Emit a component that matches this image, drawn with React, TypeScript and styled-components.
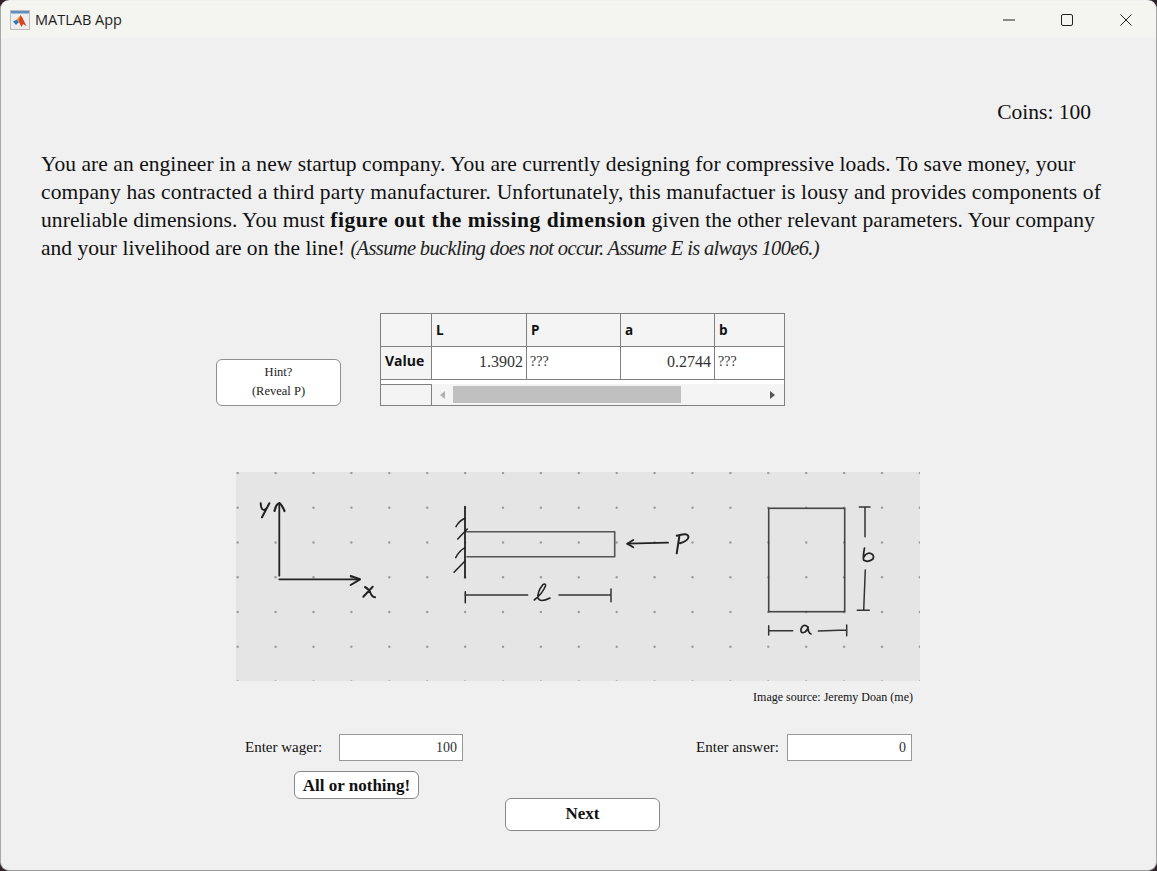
import React from "react";
import styled, { createGlobalStyle } from "styled-components";

const Global = createGlobalStyle`
  html, body { margin: 0; padding: 0; background: #2e2329; }
  body { width: 1157px; height: 871px; overflow: hidden; }
  * { box-sizing: border-box; }
`;

const serif = `"Liberation Serif", "Times New Roman", serif`;
const sans = `"Open Sans", "Noto Sans", sans-serif`;

const Window = styled.div`
  width: 1157px;
  height: 871px;
  padding-top: 1px;
  display: flex;
  flex-direction: column;
  background: #f0f0f0;
  border-radius: 9px;
  border-bottom: 1px solid #9a9a9a;
  border-right: 1px solid #a8a8a8;
  border-left: 1px solid #a8a8a8;
  overflow: hidden;
  font-family: ${serif};
  color: #111;
`;
const TitleBar = styled.header`
  height: 37px;
  flex: none;
  display: flex;
  align-items: center;
  background: #f4f4f0;
  padding: 0 1px 0 9px;
`;
const AppIcon = styled.svg`
  width: 20px;
  height: 20px;
  flex: none;
`;
const TitleText = styled.span`
  margin-left: 5px;
  font: 14.5px ${sans};
  color: #1c1c1c;
  flex: 1;
`;
const WinButton = styled.button`
  width: 58.5px;
  height: 37px;
  padding: 0;
  border: 0;
  background: none;
  display: flex;
  align-items: center;
  justify-content: center;
`;
const Main = styled.main`
  flex: 1;
  display: flex;
  flex-direction: column;
`;
const Coins = styled.div`
  margin-top: 62px;
  padding-right: 65px;
  text-align: right;
  font-size: 21.5px;
  line-height: 24px;
`;
const Prose = styled.div`
  margin: 26px 0 0 40px;
  font-size: 21.5px;
  line-height: 28px;
  white-space: nowrap;
`;
const Line = styled.p<{ $track: number }>`
  margin: 0;
  letter-spacing: ${(p) => p.$track}px;
`;
const Strong = styled.b`
  letter-spacing: 0.55px;
`;
const Aside = styled.em`
  color: #222;
  font-size: 20.5px;
  letter-spacing: -0.65px;
`;
const DataRow = styled.section`
  margin: 51px 0 0 215px;
  display: flex;
  align-items: flex-end;
  gap: 39px;
`;
const HintButton = styled.button`
  width: 125px;
  height: 47px;
  padding: 0 0 1px;
  background: #fff;
  border: 1px solid #8f8f8f;
  border-radius: 6px;
  font: 12.5px/19px ${serif};
  color: #222;
`;
const TableBox = styled.div`
  width: 405px;
  height: 93px;
  border: 1px solid #808080;
  background: #fff;
  display: flex;
  flex-direction: column;
`;
const Grid = styled.div`
  display: grid;
  grid-template-columns: 51px 95px 94px 94px 69px;
  grid-template-rows: 33px 32px;
  border-bottom: 1px solid #808080;
  height: 66px;
  flex: none;
`;
const HeadCell = styled.div`
  background: #f4f4f4;
  border-right: 1px solid #808080;
  border-bottom: 1px solid #808080;
  padding-left: 4px;
  display: flex;
  align-items: center;
  font: 700 13.5px ${sans};
  color: #111;
  &:nth-child(5) { border-right: 0; }
`;
const RowHead = styled(HeadCell)`
  border-bottom: 0;
  padding-bottom: 5px;
  font-size: 14px;
`;
const Cell = styled.div<{ $num?: boolean }>`
  background: #fff;
  border-right: 1px solid #808080;
  padding: 0 3px 3px;
  display: flex;
  align-items: center;
  justify-content: ${(p) => (p.$num ? "flex-end" : "flex-start")};
  font-size: ${(p) => (p.$num ? "16px" : "14px")};
  color: #333;
  &:last-child { border-right: 0; }
`;
const ScrollRow = styled.div`
  flex: 1;
  display: flex;
  align-items: flex-end;
`;
const ScrollCorner = styled.div`
  width: 51px;
  height: 21px;
  background: #f4f4f4;
  border-top: 1px solid #808080;
  border-right: 1px solid #808080;
  flex: none;
`;
const ScrollTrack = styled.div`
  flex: 1;
  height: 21px;
  padding: 0 9px 0 8px;
  display: flex;
  align-items: center;
  background: #f4f4f4;
`;
const ScrollThumb = styled.div`
  width: 228px;
  height: 17px;
  margin-left: 8px;
  background: #c0c0c0;
`;
const Arrow = styled.span<{ $right?: boolean; $c: string }>`
  width: 0;
  height: 0;
  margin-left: ${(p) => (p.$right ? "auto" : "0")};
  border-top: 4px solid transparent;
  border-bottom: 4px solid transparent;
  ${(p) => (p.$right ? `border-left: 5px solid ${p.$c};` : `border-right: 5px solid ${p.$c};`)}
`;
const Figure = styled.figure`
  margin: 66px 0 0 235px;
  width: 684px;
`;
const Sketch = styled.svg`
  display: block;
  width: 684px;
  height: 209px;
  background: #e5e5e5;
`;
const Caption = styled.figcaption`
  margin-top: 9px;
  padding-right: 7px;
  text-align: right;
  font-size: 12px;
  line-height: 14px;
`;
const Fields = styled.div`
  margin: 30px 0 0 244px;
  width: 667px;
  display: flex;
  justify-content: space-between;
`;
const Field = styled.label<{ $gap: number }>`
  display: flex;
  align-items: center;
  gap: ${(p) => p.$gap}px;
  font-size: 15px;
`;
const NumberInput = styled.input<{ $w: number }>`
  width: ${(p) => p.$w}px;
  height: 27px;
  padding: 0 5px 0 0;
  border: 1px solid #999;
  border-radius: 0;
  outline: none;
  background: #fff;
  text-align: right;
  font: 14px ${serif};
  color: #333;
`;
const Actions = styled.div`
  margin: 10px 0 0 293px;
  display: flex;
  align-items: flex-start;
`;
const BoldButton = styled.button`
  width: 125px;
  height: 28px;
  padding: 2px 0 0;
  background: #fff;
  border: 1px solid #888;
  border-radius: 6px;
  font: 700 17px ${serif};
  color: #111;
`;
const NextButton = styled(BoldButton)`
  width: 155px;
  height: 33px;
  padding: 0 0 2px;
  margin: 27px 0 0 86px;
`;

const dots: [number, number][] = [];
for (let j = 0; j <= 6; j++) for (let i = 0; i <= 18; i++) dots.push([1.7 + 37.9 * i, 1 + 34.75 * j]);

const Ink = ({ d, w = 1.8, c = "#222" }: { d: string; w?: number; c?: string }) => (
  <path d={d} fill="none" stroke={c} strokeWidth={w} strokeLinecap="round" strokeLinejoin="round" />
);

const Diagram = () => (
  <Sketch viewBox="0 0 684 209">
    {dots.map(([x, y]) => (
      <circle key={`${x}-${y}`} cx={x} cy={y} r={1.2} fill="#9c9c9c" />
    ))}
    <Ink d="M43.3 103.7 L43.3 33" />
    <Ink d="M38.5 39 Q40 32 43.5 31 Q46 33 48.5 39" w={2.2} />
    <Ink d="M43.3 107.3 L122.3 107.3" />
    <Ink d="M114.7 104 L124 107.3 L114.7 113" w={2} />
    <Ink d="M24.7 31.3 Q25 38 28 38 Q31 37 33.3 31.3 L26 45.3" w={2} />
    <Ink d="M129 115 Q133 117 135 122 Q136 125 139 125.3 M136.7 114.7 L127.3 124.7" w={2} />

    <Ink d="M229 34.7 L229 105.7" />
    <Ink d="M220 54.7 Q223 49 229 46.3 M221.7 67 L231.3 57 M219.7 85.7 Q223 79 229 75.7 M218 100.3 L229 89" w={1.5} />
    <Ink d="M230.7 59.7 L378.7 59.7 L378.7 84.7 L231 84.7" c="#555" w={1.6} />
    <Ink d="M391.3 71.7 L432 70.7" />
    <Ink d="M397.3 68 L391.3 71.7 L397.3 75.3" />
    <Ink d="M443.3 64.7 L440.7 81.3 M440.7 63.7 Q452 60 452.5 65 Q452 69 444 71.3" w={2} />

    <Ink d="M229.3 119.7 L229.3 130.7" w={1.5} />
    <Ink d="M229.3 123 L291.7 123" c="#333" w={1.5} />
    <Ink d="M298.3 128 Q306 122 309.5 114 Q310 111 307 112.5 Q301 120 302 126 Q304 131 314 126" w={1.6} />
    <Ink d="M323 123 L375 123 M375 117 L375 129.7" c="#333" w={1.5} />

    <rect x={532.7} y={36.3} width={76} height={103.4} fill="none" stroke="#444" strokeWidth={1.6} />
    <Ink d="M623.3 35 L634 35 M629 35 L629 64.7 M629.3 98 L627.7 138 M621.3 138.3 L633.3 138.3" c="#333" w={1.5} />
    <Ink d="M628.5 76 Q627 84 627.5 88 Q632 91 637 87 Q639 82 633 81 Q629 82 628 85" w={1.7} />
    <Ink d="M532.7 153.7 L532.7 163 M532.7 158.7 L556.7 158.7 M582.3 159 L610.7 158 M610.7 153 L610.7 163.7" c="#333" w={1.5} />
    <Ink d="M572 155 Q567 151 565 157 Q564 162 569 160 Q572 158 572 155 Q572 161 575 162" w={1.7} />
  </Sketch>
);

export default function App() {
  return (
    <>
      <Global />
      <Window>
        <TitleBar>
          <AppIcon viewBox="0 0 20 20">
            <rect x="0.5" y="0.5" width="19" height="19" fill="#ededed" stroke="#b9b9b9" />
            <rect x="1" y="1" width="18" height="2.5" fill="#5d8fc0" />
            <path d="M3 11.5 L7 9.5 L9 12 L6 15 Z" fill="#2f79b5" />
            <path d="M7 9.5 L10.5 5 L13 9 L9 12 Z" fill="#e8862a" />
            <path d="M10.5 5 L13 9 L16.5 16 L13 14 L11.5 17 L9 12 Z" fill="#d9431e" />
          </AppIcon>
          <TitleText>MATLAB App</TitleText>
          <WinButton aria-label="Minimize">
            <svg width="12" height="12" viewBox="0 0 12 12"><path d="M0 6 H12" stroke="#222" strokeWidth="1" /></svg>
          </WinButton>
          <WinButton aria-label="Maximize">
            <svg width="12" height="12" viewBox="0 0 12 12"><rect x="0.5" y="0.5" width="11" height="11" rx="1.5" fill="none" stroke="#222" /></svg>
          </WinButton>
          <WinButton aria-label="Close">
            <svg width="12" height="12" viewBox="0 0 12 12"><path d="M0.5 0.5 L11.5 11.5 M11.5 0.5 L0.5 11.5" stroke="#222" /></svg>
          </WinButton>
        </TitleBar>
        <Main>
          <Coins>Coins: 100</Coins>
          <Prose>
            <Line $track={0.056}>You are an engineer in a new startup company. You are currently designing for compressive loads. To save money, your</Line>
            <Line $track={0.156}>company has contracted a third party manufacturer. Unfortunately, this manufactuer is lousy and provides components of</Line>
            <Line $track={0.08}>unreliable dimensions. You must <Strong>figure out the missing dimension</Strong> given the other relevant parameters. Your company</Line>
            <Line $track={0.02}>and your livelihood are on the line! <Aside>(Assume buckling does not occur. Assume E is always 100e6.)</Aside></Line>
          </Prose>
          <DataRow>
            <HintButton>
              Hint?
              <br />
              (Reveal P)
            </HintButton>
            <TableBox>
              <Grid>
                <HeadCell />
                <HeadCell>L</HeadCell>
                <HeadCell>P</HeadCell>
                <HeadCell>a</HeadCell>
                <HeadCell>b</HeadCell>
                <RowHead>Value</RowHead>
                <Cell $num>1.3902</Cell>
                <Cell>???</Cell>
                <Cell $num>0.2744</Cell>
                <Cell>???</Cell>
              </Grid>
              <ScrollRow>
                <ScrollCorner />
                <ScrollTrack>
                  <Arrow $c="#b0b0b0" />
                  <ScrollThumb />
                  <Arrow $right $c="#555" />
                </ScrollTrack>
              </ScrollRow>
            </TableBox>
          </DataRow>
          <Figure>
            <Diagram />
            <Caption>Image source: Jeremy Doan (me)</Caption>
          </Figure>
          <Fields>
            <Field $gap={17}>
              Enter wager:
              <NumberInput readOnly value="100" $w={124} />
            </Field>
            <Field $gap={8}>
              Enter answer:
              <NumberInput readOnly value="0" $w={125} />
            </Field>
          </Fields>
          <Actions>
            <BoldButton>All or nothing!</BoldButton>
            <NextButton>Next</NextButton>
          </Actions>
        </Main>
      </Window>
    </>
  );
}
